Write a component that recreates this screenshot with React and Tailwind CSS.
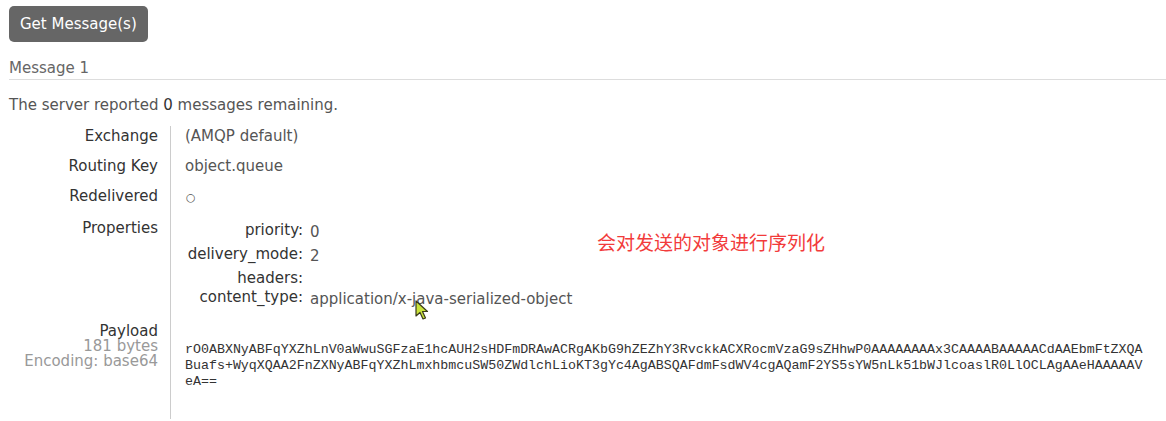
import React from 'react';

const payload =
    'rO0ABXNyABFqYXZhLnV0aWwuSGFzaE1hcAUH2sHDFmDRAwACRgAKbG9hZEZhY3RvckkACXRocmVzaG9sZHhwP0AAAAAAAAx3CAAAABAAAAACdAAEbmFtZXQA' +
    'Buafs+WyqXQAA2FnZXNyABFqYXZhLmxhbmcuSW50ZWdlchLioKT3gYc4AgABSQAFdmFsdWV4cgAQamF2YS5sYW5nLk51bWJlcoaslR0LlOCLAgAAeHAAAAAV' +
    'eA==';

const props = [
    { key: 'priority:', value: '0', h: 'h-[24px]' },
    { key: 'delivery_mode:', value: '2', h: 'h-[24px]' },
    { key: 'headers:', value: '', h: 'h-[19px]' },
    { key: 'content_type:', value: 'application/x-java-serialized-object', h: 'h-[20px]' },
];

const Row = ({ label, children, pb = 'pb-[10px]' }) => (
    <>
        <div className={`text-right pr-[12px] text-[#333] ${pb}`}>{label}</div>
        <div className={`border-l border-[#ccc] pl-[14px] ${pb}`}>{children}</div>
    </>
);

const Cursor = () => (
    <svg width="16" height="22" viewBox="0 0 16 22" className="absolute left-[415px] top-[300px]">
        <path d="M1 1 L1 16 L5 12.5 L8 19 L10.5 18 L7.5 11.5 L12.5 11.5 Z" fill="#c9e23a" stroke="#3a3a1a" strokeWidth="1.2" strokeLinejoin="round" />
    </svg>
);

export default function App() {
    return (
        <div className="relative w-[1166px] h-[421px] overflow-hidden bg-white font-['DejaVu_Sans',sans-serif] text-[15px] leading-[20px] text-[#555]">
            <div className="pt-[6px] pl-[9px]">
                <button className="h-[36px] px-[11px] rounded-[5px] bg-[#666] text-white text-[15px]">
                    Get Message(s)
                </button>
            </div>

            <div className="ml-[9px] mt-[16px] pb-[1px] border-b border-[#ddd] text-[#666]">Message 1</div>

            <p className="ml-[9px] mt-[15px]">
                The server reported <span className="text-[#333]">0</span> messages remaining.
            </p>

            <div className="grid grid-cols-[170px_1fr] mt-[11px]">
                <Row label="Exchange">(AMQP default)</Row>
                <Row label="Routing Key">object.queue</Row>
                <Row label="Redelivered">
                    <span className="text-[11px] pl-[1px]">○</span>
                </Row>
                <Row label="Properties" pb="pb-[17px]">
                    <div className="pt-[2px]">
                        {props.map((p) => (
                            <div key={p.key} className={`flex ${p.h}`}>
                                <div className="w-[118px] text-right text-[#333]">{p.key}</div>
                                <div className="pl-[7px] pt-[2px]">{p.value}</div>
                            </div>
                        ))}
                    </div>
                </Row>
                <div className="text-right pr-[12px] leading-[15px] h-[95px]">
                    <div className="text-[#333]">Payload</div>
                    <div className="text-[#999]">181 bytes</div>
                    <div className="text-[#999]">Encoding: base64</div>
                </div>
                <div className="border-l border-[#ccc] pl-[14px] pt-[18px]">
                    <div className="w-[960px] break-all font-['Liberation_Mono',monospace] text-[13.3px] leading-[16px] text-[#333]">
                        {payload}
                    </div>
                </div>
            </div>

            <div className="absolute left-[597px] top-[231px] text-[19px] leading-[22px] text-[#f23b3b] font-['Noto_Sans_CJK_SC',sans-serif]">
                会对发送的对象进行序列化
            </div>

            <Cursor />
        </div>
    );
}
